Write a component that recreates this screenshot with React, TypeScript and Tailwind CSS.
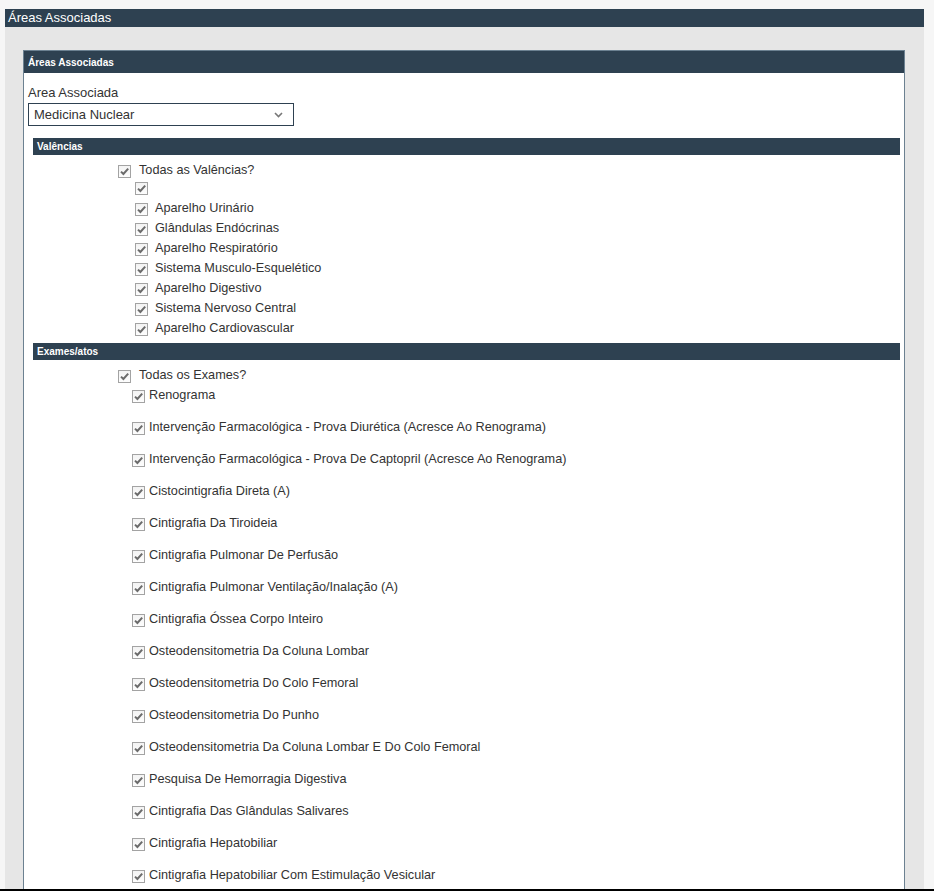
const valencias = [
  '',
  'Aparelho Urinário',
  'Glândulas Endócrinas',
  'Aparelho Respiratório',
  'Sistema Musculo-Esquelético',
  'Aparelho Digestivo',
  'Sistema Nervoso Central',
  'Aparelho Cardiovascular',
];

const exames = [
  'Renograma',
  'Intervenção Farmacológica - Prova Diurética (Acresce Ao Renograma)',
  'Intervenção Farmacológica - Prova De Captopril (Acresce Ao Renograma)',
  'Cistocintigrafia Direta (A)',
  'Cintigrafia Da Tiroideia',
  'Cintigrafia Pulmonar De Perfusão',
  'Cintigrafia Pulmonar Ventilação/Inalação (A)',
  'Cintigrafia Óssea Corpo Inteiro',
  'Osteodensitometria Da Coluna Lombar',
  'Osteodensitometria Do Colo Femoral',
  'Osteodensitometria Do Punho',
  'Osteodensitometria Da Coluna Lombar E Do Colo Femoral',
  'Pesquisa De Hemorragia Digestiva',
  'Cintigrafia Das Glândulas Salivares',
  'Cintigrafia Hepatobiliar',
  'Cintigrafia Hepatobiliar Com Estimulação Vesicular',
];

function Check() {
  return (
    <span className="inline-flex h-[13px] w-[13px] shrink-0 items-center justify-center border border-[#a3a3a3] bg-gradient-to-b from-[#f3f3f3] to-[#fdfdfd]">
      <svg width="11" height="11" viewBox="0 0 11 11">
        <path d="M2 5.6 L4.4 8 L9.2 2.6" fill="none" stroke="#6b6b6b" strokeWidth="2" />
      </svg>
    </span>
  );
}

function SectionBar({ title }: { title: string }) {
  return (
    <div className="ml-[9px] mr-[4px] flex h-[17px] items-center bg-[#2e4151] pl-[4px] text-[10px] font-bold text-white">
      {title}
    </div>
  );
}

export default function App() {
  return (
    <div
      className="flex h-[891px] flex-col overflow-hidden bg-[#f6f6f6] text-[13px] text-[#333]"
      style={{ fontFamily: '"Liberation Sans", Arial, sans-serif' }}
    >
      <div className="mx-[5px] mt-[9px] flex min-h-0 w-[919px] flex-1 flex-col">
        <div className="flex h-[18px] items-center bg-[#2e4151] pl-[3px] text-[13px] text-white">Áreas Associadas</div>
        <div className="min-h-0 flex-1 overflow-hidden bg-[#e6e6e6] pl-[18px] pr-[19px] pt-[23px]">
          <div className="border border-[#6c8191] bg-white pb-6">
            <div className="flex h-[22px] items-center bg-[#2e4151] pl-[4px] text-[10px] font-bold text-white">
              Áreas Associadas
            </div>
            <div className="px-[4px] pt-[11px]">
              <div className="h-[17px] leading-[17px]">Area Associada</div>
              <div className="mt-[2px] flex h-[23px] w-[266px] items-center justify-between border border-[#2e4151] pl-[5px] pr-[10px]">
                <span>Medicina Nuclear</span>
                <svg width="9" height="6" viewBox="0 0 9 6">
                  <path d="M1 1 L4.5 4.5 L8 1" fill="none" stroke="#777" strokeWidth="1.6" />
                </svg>
              </div>
            </div>

            <div className="mt-[12px] text-[12.7px]">
              <SectionBar title="Valências" />
              <div className="mt-[6px] pl-[94px]">
                <div className="flex h-[20px] items-center gap-[8px]">
                  <Check />
                  <span>Todas as Valências?</span>
                </div>
                <div className="pl-[17px]">
                  {valencias.map((v) =>
                    v === '' ? (
                      <div key="empty" className="flex h-[18px] items-start pt-[1px]">
                        <Check />
                      </div>
                    ) : (
                      <div key={v} className="flex h-[20px] items-center gap-[7px]">
                        <Check />
                        <span>{v}</span>
                      </div>
                    ),
                  )}
                </div>
              </div>
            </div>

            <div className="mt-[4px] text-[12.7px]">
              <SectionBar title="Exames/atos" />
              <div className="mt-[6px] pl-[94px]">
                <div className="flex h-[20px] items-center gap-[8px]">
                  <Check />
                  <span>Todas os Exames?</span>
                </div>
                <div className="pl-[14px]">
                  {exames.map((e) => (
                    <div key={e} className="mb-[12px] flex h-[20px] items-center gap-[4px]">
                      <Check />
                      <span>{e}</span>
                    </div>
                  ))}
                </div>
              </div>
            </div>
          </div>
        </div>
      </div>
      <div className="h-[2px] shrink-0 bg-black" />
    </div>
  );
}
